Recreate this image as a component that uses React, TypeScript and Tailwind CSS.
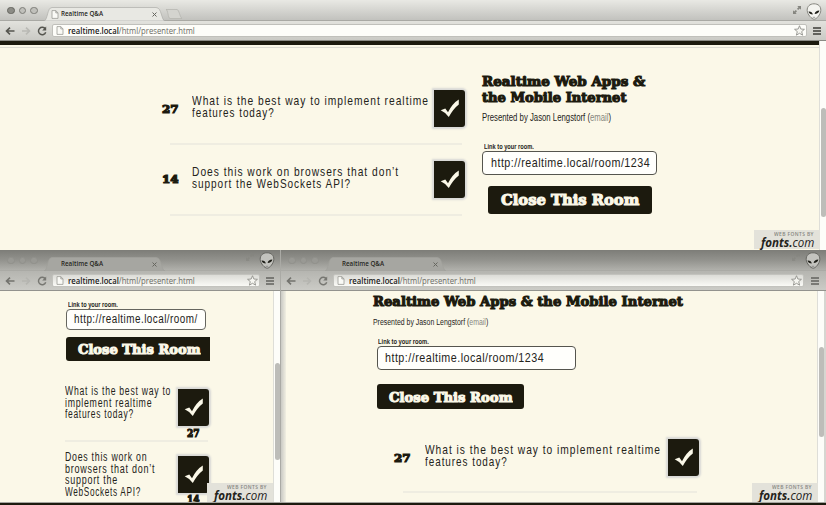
import { useLayoutEffect, useRef, useState } from "react";
import type { ReactNode } from "react";

const GOTHIC = "font-['Liberation_Sans',Arial,sans-serif] text-[#24231a]";
const SLAB = "font-['DejaVu_Serif',serif] font-bold [-webkit-text-stroke:1.1px_currentColor]";
const CHROME = "font-['Open_Sans','Noto_Sans',sans-serif]";

/** One line of text condensed or widened to an exact width. */
function Line({ w, className, children }: { w: number; className: string; children: ReactNode }) {
  const ref = useRef<HTMLSpanElement>(null);
  const [scale, setScale] = useState(1);
  useLayoutEffect(() => {
    if (ref.current) setScale(w / ref.current.offsetWidth);
  }, [w]);
  return (
    <div className={"whitespace-nowrap " + className} style={{ width: w }}>
      <span ref={ref} className="inline-block origin-left" style={{ transform: `scaleX(${scale})` }}>
        {children}
      </span>
    </div>
  );
}

function Page() {
  return (
    <svg viewBox="0 0 8 9" className="h-[9px] w-2 shrink-0" fill="#fafaf6" stroke="#9a9a96" strokeWidth=".8">
      <path d="M1 .6h3.800L7 2.900v5.500H1zM4.800.6v2.300H7" />
    </svg>
  );
}

function Alien({ dim }: { dim?: boolean }) {
  return (
    <svg viewBox="0 0 16 17" className="h-[17px] w-4 shrink-0">
      <path
        d="M8 .8C12.400.8 15 3.500 14.800 7.400c-.2 4-4 8.700-6.600 8.800C5.700 16.200 1.400 11.500 1.200 7.400 1 3.500 3.800.8 8 .8z"
        fill={dim ? "#c3c3be" : "#f4f4f0"}
        stroke={dim ? "#666661" : "#85857f"}
        strokeWidth="1"
      />
      <path d="M2.500 8.500c2.300-.2 4 .8 4.300 2.900-2.200 0-3.900-.9-4.300-2.900zM13.400 7.600c-2.500-.1-4.500 1.200-4.800 3.500 2.500-.1 4.500-1.300 4.800-3.500z" fill="#20201a" />
      <path d="M6.700 14.300h2.500" stroke="#777" strokeWidth=".7" />
    </svg>
  );
}

function Expand() {
  return (
    <svg viewBox="0 0 8 8" className="h-2 w-2 shrink-0" fill="#85857f">
      <path d="M4.300 0H8v3.700L6.800 2.500 5.200 4 4 2.800l1.500-1.600zM3.700 8H0V4.300l1.200 1.200L2.800 4 4 5.200 2.500 6.800z" />
    </svg>
  );
}

function Chrome({ dim, inset }: { dim?: boolean; inset?: boolean }) {
  return (
    <div className="shrink-0">
      <div
        className={
          "flex h-[21px] border-b " +
          (dim
            ? "border-[#aaaaa5] bg-linear-to-b from-[#7d7d78] via-[#92928d] to-[#b0b0ab]"
            : "border-[#a9a9a4] bg-linear-to-b from-[#e9e9e4] to-[#c2c2be]")
        }
      >
        <div className="flex w-[44px] items-center gap-[4px] pl-[7px] pt-[1px]">
          {[0, 1, 2].map((i) => (
            <span
              key={i}
              className={
                "size-[7.500px] rounded-full border " +
                (dim ? "border-[#90908b] bg-[#999994]" : i === 0 ? "border-[#66665f] bg-[#8c8c86]" : "border-[#7d7d78] bg-[#c0c0bb]")
              }
            />
          ))}
        </div>
        <div className="relative mt-[7px] flex h-[14px] w-[121px] items-center">
          <svg viewBox="0 0 121 14" className="absolute inset-0 h-[14px] w-[121px]">
            <path
              d="M0 14C4 13 3 .5 8 .5H112C118 .5 117 13 121 14Z"
              fill={dim ? "#a6a6a1" : "#e8e8e3"}
              stroke={dim ? "#a0a09b" : "#aeaea9"}
              strokeWidth=".7"
            />
          </svg>
          <div className="relative flex items-center gap-[2px] pl-[7px]">
            {dim ? <span className="w-2" /> : <Page />}
            <Line w={42} className={CHROME + " text-[7px] font-semibold leading-[12px] text-[#262622]"}>
              Realtime Q&amp;A
            </Line>
            <svg viewBox="0 0 5 5" className="ml-[47px] size-[5px]" stroke="#66665f" strokeWidth="1">
              <path d="M.5.5l4 4M4.500.5l-4 4" />
            </svg>
          </div>
        </div>
        {!dim && (
          <svg viewBox="0 0 18 10" className="mt-[9px] h-[10px] w-[18px]">
            <path d="M1 .5H12c2 0 3 8 5 9H5C3 9.500 3 .5 1 .5z" fill="#d4d4cf" stroke="#b3b3ae" strokeWidth=".7" />
          </svg>
        )}
        <div className={"ml-auto flex items-start gap-[5px] " + (dim ? "pr-[5px]" : "pr-[4px]")}>
          <span className={dim ? "mt-[3px] opacity-60" : "mt-[6px]"}>
            <Expand />
          </span>
          <span className={dim ? "mt-[2px]" : "mt-[3px]"}>
            <Alien dim={dim} />
          </span>
        </div>
      </div>
      <div
        className={
          "flex h-[20px] items-center border-b pl-[5px] " +
          (dim
            ? "border-[#93938e] bg-linear-to-b from-[#b5b5b0] to-[#cbcbc6]"
            : "border-[#8b8b85] bg-linear-to-b from-[#e2e2dd] to-[#cacac5]")
        }
      >
        <svg viewBox="0 0 10 8" className="h-2 w-[10px]" fill="none" stroke={dim ? "#73736e" : "#55554f"} strokeWidth="1.600">
          <path d="M9.500 4H1.500M5 .6L1.500 4 5 7.400" />
        </svg>
        <svg viewBox="0 0 10 8" className="ml-[6px] h-2 w-[10px]" fill="none" stroke={dim ? "#b5b5b0" : "#b9b9b4"} strokeWidth="1.600">
          <path d="M1 4h7M5 .6L8.500 4 5 7.400" />
        </svg>
        <svg viewBox="0 0 10 10" className="ml-[6px] size-[10px]" fill="none" stroke={dim ? "#777772" : "#55554f"} strokeWidth="1.500">
          <path d="M8.300 3A3.700 3.700 0 1 0 8.700 6.200" />
          <path d="M9.200.5v4H5.200z" fill={dim ? "#777772" : "#55554f"} stroke="none" />
        </svg>
        <div
          className={
            "ml-[5px] flex h-[13px] flex-1 items-center rounded-[2px] border pl-[3px] pr-px " +
            (dim ? "border-[#c3c3be] bg-linear-to-b from-[#dcdcd7] to-[#fafaf6]" : "border-[#c0c0bb] bg-[#fdfdf9]")
          }
        >
          <Page />
          <Line w={127} className={CHROME + " ml-[4px] text-[8.500px] leading-[11px] text-[#6b6b64]"}>
            <span className="font-semibold text-[#20201a]">realtime.local</span>/html/presenter.html
          </Line>
          <svg viewBox="0 0 12 12" className="ml-auto size-[11px]" fill="#f6f6f1" stroke="#898984" strokeWidth=".9">
            <path d="M6 .8l1.500 3.600 3.900.3-3 2.500 1 3.900L6 9l-3.400 2.100 1-3.900-3-2.500 3.900-.3z" />
          </svg>
        </div>
        <svg viewBox="0 0 8 8" className={"h-2 w-2 " + (inset ? "ml-[7px] mr-[7px]" : dim ? "ml-[6px] mr-[6px]" : "ml-[6px] mr-[5px]")} stroke={dim ? "#62625d" : "#3d3d37"} strokeWidth="1.600">
          <path d="M0 1h8M0 4h8M0 7h8" />
        </svg>
      </div>
    </div>
  );
}

function Check() {
  return (
    <div className="h-[37px] w-[31px] shrink-0 rounded-r-[3px] bg-[#1c1a0e] shadow-[0_0_2px_2px_#d8d8d6]">
      <svg viewBox="0 0 31 37" className="h-[37px] w-[31px]" fill="#fbf8e8">
        <path d="M6.700 20.300L11.300 18.500 14 22.200Q18.500 13.300 24.800 9.500V14.500Q19.500 18.500 14.800 27Q11.500 22.500 6.700 20.300z" />
      </svg>
    </div>
  );
}

function Votes({ w = 17, children }: { w?: number; children: ReactNode }) {
  return (
    <Line w={w} className={SLAB + " text-[10.500px] leading-[12px] text-[#1c1a0e]"}>
      {children}
    </Line>
  );
}

function Question({ lines, tight }: { lines: [string, number][]; tight?: boolean }) {
  return (
    <div>
      {lines.map(([text, w]) => (
        <Line
          key={text}
          w={w}
          className={GOTHIC + (tight ? " text-[12px] leading-[11.500px] tracking-[1px]" : " text-[13.500px] leading-[12.300px] tracking-[1.3px]")}
        >
          {text}
        </Line>
      ))}
    </div>
  );
}

function Rule({ className }: { className: string }) {
  return <div className={"h-[2px] shrink-0 bg-[#efede1] " + className} />;
}

function Label({ w }: { w: number }) {
  return (
    <Line w={w} className={GOTHIC + " text-[7.500px] font-bold leading-[9px]"}>
      Link to your room.
    </Line>
  );
}

function Presented({ w, className }: { w: number; className: string }) {
  return (
    <Line w={w} className={GOTHIC + " " + className}>
      Presented by Jason Lengstorf (<span className="text-[#87877f]">email</span>)
    </Line>
  );
}

function Badge() {
  return (
    <div className={CHROME + " flex h-[19px] w-[66px] flex-col items-end bg-[#e3e2da] pr-[6px]"}>
      <Line w={40} className="text-[6px] font-semibold leading-[8px] tracking-[0.5px] text-[#85857f]">
        WEB FONTS BY
      </Line>
      <Line w={53} className="text-[12px] font-medium italic leading-[9px] text-[#24231c]">
        <b>fonts.</b>com
      </Line>
    </div>
  );
}

function Track({ className, thumb }: { className: string; thumb: string }) {
  return (
    <div className={"shrink-0 border-l border-[#deded8] bg-[#fdfdf9] " + className}>
      <div className={"rounded-full bg-[#bdbdb9] " + thumb} />
    </div>
  );
}

const CTA = SLAB + " text-[#fbf8e8]";

export default function App() {
  return (
    <div className="flex h-[505px] w-[826px] flex-col overflow-hidden bg-[#1c1a0e]">
      <section className="relative flex h-[250px] shrink-0 flex-col bg-[#fbf8e8]">
        <Chrome />
        <div className="flex min-h-0 flex-1">
          <div className="flex min-w-0 flex-1 flex-col">
            <div className="h-[4px] shrink-0 bg-[#1c1a0e]" />
            <div className="mt-[2px] h-px shrink-0 bg-[#dddcd3]" />
            <div className="flex">
              <div className="w-[482px] pl-[162px] pt-[42px]">
                <div className="flex h-[37px]">
                  <div className="w-[30px] pt-[13px]">
                    <Votes>27</Votes>
                  </div>
                  <div className="w-[242px] pt-[5px]">
                    <Question lines={[["What is the best way to implement realtime", 237], ["features today?", 83]]} />
                  </div>
                  <Check />
                </div>
                <Rule className="ml-[8px] mt-[16px] w-[292px]" />
                <div className="mt-[16px] flex h-[37px]">
                  <div className="w-[30px] pt-[12px]">
                    <Votes>14</Votes>
                  </div>
                  <div className="w-[242px] pt-[5px]">
                    <Question lines={[["Does this work on browsers that don’t", 207], ["support the WebSockets API?", 159]]} />
                  </div>
                  <Check />
                </div>
                <Rule className="ml-[8px] mt-[16px] w-[292px]" />
              </div>
              <div className="pt-[26px]">
                <Line w={163} className={SLAB + " text-[13px] leading-[15.500px] text-[#1c1a0e]"}>Realtime Web Apps &amp;</Line>
                <Line w={144} className={SLAB + " text-[13px] leading-[15.500px] text-[#1c1a0e]"}>the Mobile Internet</Line>
                <Presented w={129} className="mt-[7px] text-[10px] leading-[12px]" />
                <div className="mt-[18px] pl-[2px]">
                  <Label w={50} />
                </div>
                <div className="flex h-[24px] w-[175px] items-center rounded-[4px] border border-[#55554e] bg-[#fffffc] pl-[8px]">
                  <Line w={159} className={GOTHIC + " text-[13.500px] leading-[16px] tracking-[0.6px]"}>http://realtime.local/room/1234</Line>
                </div>
                <div className="ml-[6px] mt-[11px] flex h-[28px] w-[164px] items-center justify-center rounded-[3px] bg-[#1c1a0e]">
                  <Line w={138} className={CTA + " text-[15.500px] leading-[20px]"}>Close This Room</Line>
                </div>
              </div>
            </div>
          </div>
          <Track className="w-[7px] pt-[67px]" thumb="ml-px h-[109px] w-[5px]" />
        </div>
        <div className="absolute bottom-[1px] right-[6px]">
          <Badge />
        </div>
      </section>

      <div className="flex h-[253px] shrink-0">
        <section className="relative flex w-[281px] flex-col overflow-hidden border-r border-[#aaaaa5] bg-[#fbf8e8]">
          <Chrome dim />
          <div className="flex min-h-0 flex-1">
            <div className="flex w-[273px] shrink-0 flex-col pl-[65px] pt-[9px]">
              <div className="pl-[3px]">
                <Label w={50} />
              </div>
              <div className="ml-px flex h-[21px] w-[140px] shrink-0 items-center rounded-[4px] border border-[#66665f] bg-[#fffffc] pl-[7px]">
                <Line w={124} className={GOTHIC + " text-[12.500px] leading-[15px] tracking-[0.6px]"}>http://realtime.local/room/</Line>
              </div>
              <div className="ml-px mt-[7px] flex h-[24px] w-[144px] shrink-0 items-center rounded-l-[3px] bg-[#1c1a0e] pl-[12px]">
                <Line w={123} className={CTA + " text-[13.500px] leading-[18px]"}>Close This Room</Line>
              </div>
              <div className="mt-[25px] flex h-[54px] shrink-0">
                <div className="w-[113px]">
                  <Question tight lines={[["What is the best way to", 106], ["implement realtime", 87], ["features today?", 69]]} />
                </div>
                <div className="pt-[3px]">
                  <Check />
                  <div className="pl-[9px] pt-[1px]">
                    <Votes w={13}>27</Votes>
                  </div>
                </div>
              </div>
              <Rule className="w-[143px]" />
              <div className="mt-[10px] flex min-h-0 flex-1">
                <div className="w-[113px]">
                  <Question tight lines={[["Does this work on", 82], ["browsers that don’t", 90], ["support the", 53], ["WebSockets API?", 76]]} />
                </div>
                <div className="pt-[4px]">
                  <Check />
                  <div className="pl-[9px]">
                    <Votes w={13}>14</Votes>
                  </div>
                </div>
              </div>
            </div>
            <Track className="w-[8px] pt-[72px]" thumb="ml-px h-[97px] w-[5px]" />
          </div>
          <div className="absolute bottom-[1px] right-[7px]">
            <Badge />
          </div>
          <div className="absolute bottom-0 left-0 h-px w-full bg-[#a5a5a0]" />
        </section>

        <section className="relative flex flex-1 flex-col overflow-hidden border-b border-[#a5a5a0] bg-[#fbf8e8]">
          <Chrome dim inset />
          <div className="flex min-h-0 flex-1">
            <div className="w-[5px] shrink-0 bg-linear-to-r from-[#c9c9c4] to-[#f1efe2]" />
            <div className="flex w-[531px] shrink-0 flex-col pl-[87px] pt-[2px]">
              <Line w={310} className={SLAB + " text-[13.500px] leading-[16px] text-[#1c1a0e]"}>Realtime Web Apps &amp; the Mobile Internet</Line>
              <Presented w={115} className="mt-[7px] text-[8.500px] leading-[12px]" />
              <div className="mt-[9px] pl-[5px]">
                <Label w={51} />
              </div>
              <div className="ml-[4px] flex h-[24px] w-[199px] shrink-0 items-center rounded-[4px] border border-[#55554e] bg-[#fffffc] pl-[7px]">
                <Line w={159} className={GOTHIC + " text-[13.500px] leading-[16px] tracking-[0.6px]"}>http://realtime.local/room/1234</Line>
              </div>
              <div className="ml-[4px] mt-[14px] flex h-[25px] w-[147px] shrink-0 items-center justify-center rounded-[3px] bg-[#1c1a0e]">
                <Line w={124} className={CTA + " text-[13.500px] leading-[18px]"}>Close This Room</Line>
              </div>
              <div className="ml-[21px] mt-[30px] flex h-[37px] shrink-0">
                <div className="w-[31px] pt-[13px]">
                  <Votes>27</Votes>
                </div>
                <div className="w-[243px] pt-[5px]">
                  <Question lines={[["What is the best way to implement realtime", 236], ["features today?", 83]]} />
                </div>
                <Check />
              </div>
              <Rule className="ml-[30px] mt-[15px] w-[294px]" />
            </div>
            <Track className="w-[7px] pt-[56px]" thumb="ml-px h-[90px] w-[5px]" />
            <div className="flex-1 bg-[#d6d6d1]" />
          </div>
          <div className="absolute bottom-0 right-[8px]">
            <Badge />
          </div>
        </section>
      </div>
    </div>
  );
}
